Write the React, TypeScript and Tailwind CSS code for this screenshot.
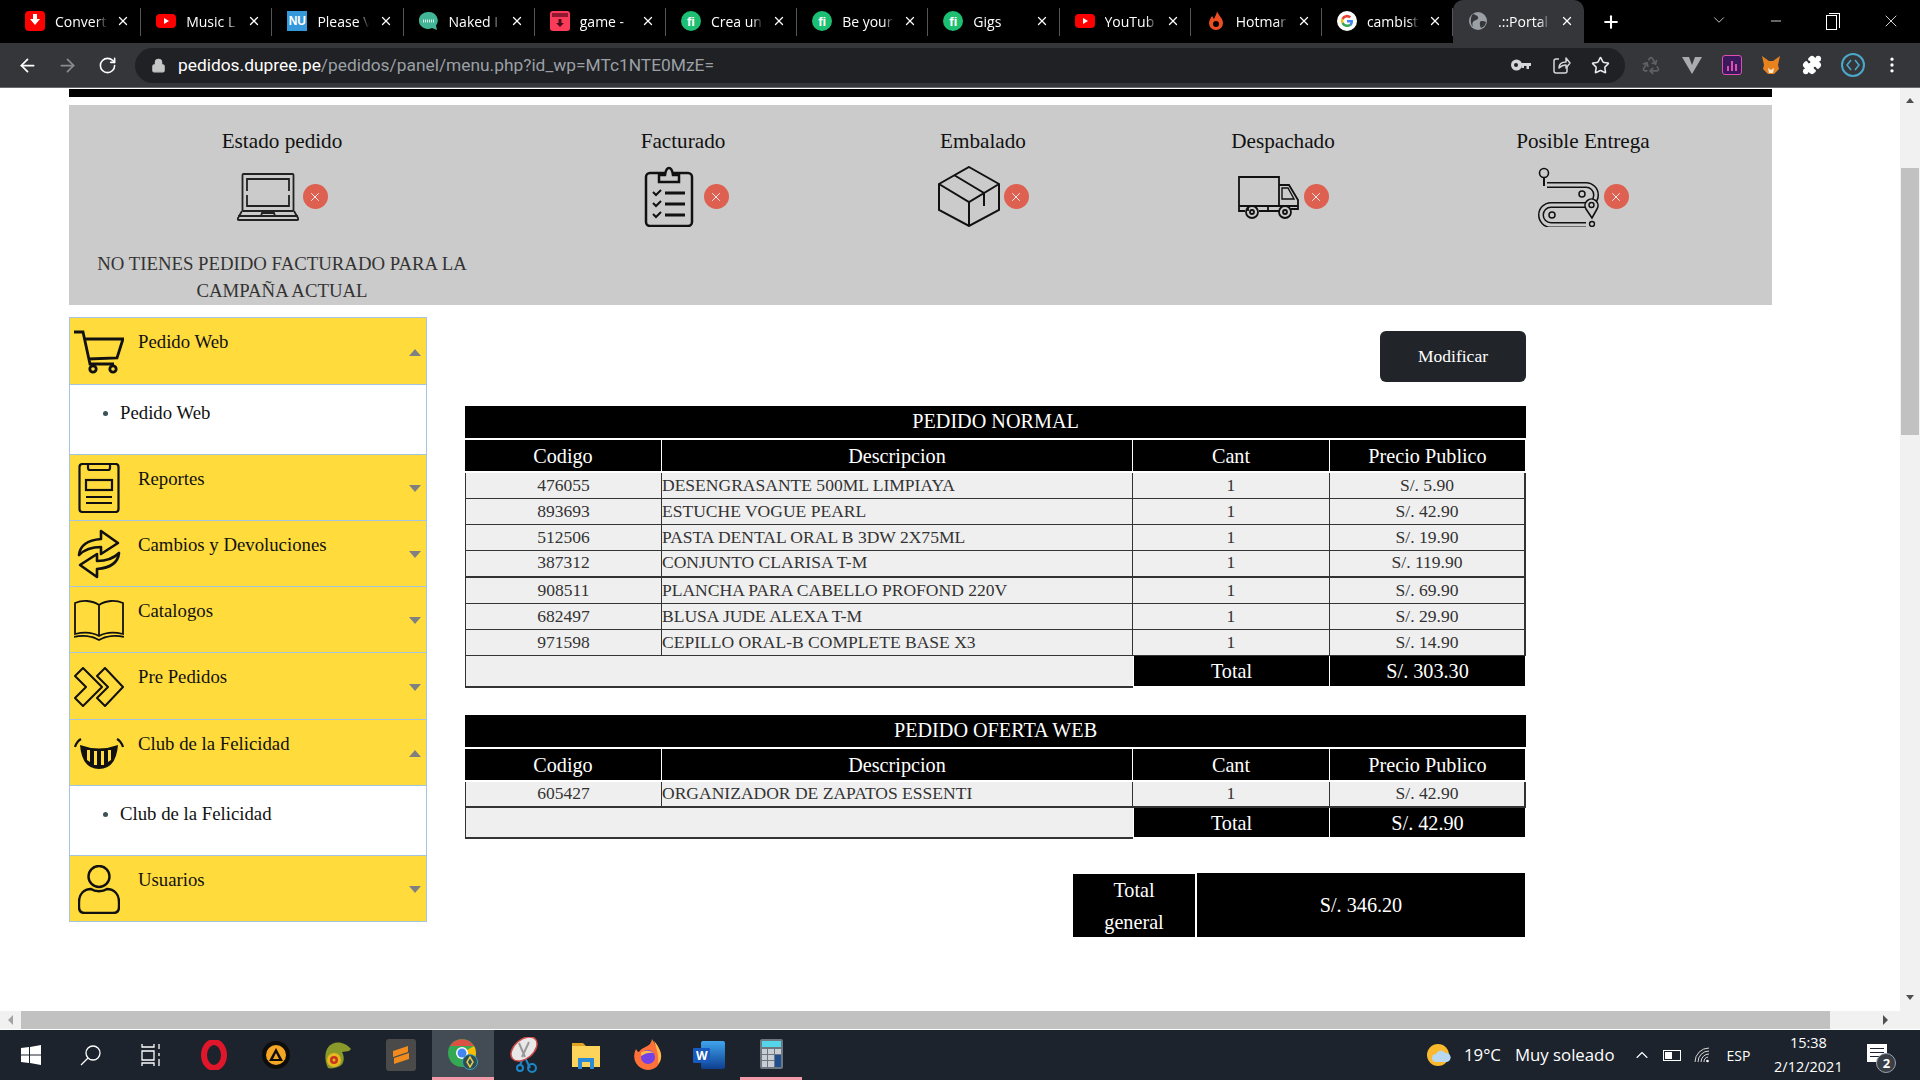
import type { ReactNode } from "react";
import { ArrowLeft, ArrowRight, ChevronDown, ChevronUp, Lock, Minus, MoreVertical, Plus, Puzzle, Recycle, RotateCw, Star, X } from "lucide-react";

// ---- favicons for the tab strip
const Yt = () => (
  <svg viewBox="0 0 20 20" className="w-5 h-5">
    <rect x="0" y="3" width="20" height="14" rx="4" fill="#f00" />
    <path d="M8 7l5 3-5 3z" fill="#fff" />
  </svg>
);
const Fiverr = () => (
  <div className="w-5 h-5 rounded-full bg-[#1dbf73] flex items-center justify-center text-white text-[13px] font-bold font-['Liberation_Sans',sans-serif] leading-none">fi</div>
);
const favicons: Record<string, ReactNode> = {
  convert: (
    <svg viewBox="0 0 20 20" className="w-5 h-5">
      <rect width="20" height="20" rx="4" fill="#f00" />
      <path d="M10 14L5 8h3V3h4v5h3z" fill="#fff" />
    </svg>
  ),
  yt: <Yt />,
  nu: <div className="w-5 h-5 bg-[#3498db] flex items-center justify-center text-white text-[12px] font-bold font-['Liberation_Sans',sans-serif] leading-none">NU</div>,
  naked: (
    <svg viewBox="0 0 20 20" className="w-5 h-5">
      <path d="M10 1a9 8.5 0 0 1 7 13.5L18 19l-5-2A9 8.5 0 1 1 10 1z" fill="#41b596" />
      <path d="M4 10h12" stroke="#d6f0e8" strokeWidth="3" strokeDasharray="1 1" />
    </svg>
  ),
  game: (
    <svg viewBox="0 0 20 20" className="w-5 h-5">
      <rect width="20" height="20" rx="3" fill="#fa3c5a" />
      <rect x="2" y="2" width="16" height="4" fill="#8f1830" />
      <path d="M10 16l-4-4h2.5V8h3v4H14z" fill="#4a0c18" />
    </svg>
  ),
  fi: <Fiverr />,
  hot: (
    <svg viewBox="0 0 20 20" className="w-5 h-5">
      <path d="M11 0c1 4 6 7 6 12a7 7 0 0 1-14 0c0-3 2-5 3-7 1 1 1 2 2 3 1-3 3-5 3-8z" fill="#ef4e23" />
      <circle cx="10" cy="13" r="3" fill="#000" />
    </svg>
  ),
  google: (
    <svg viewBox="0 0 20 20" className="w-5 h-5">
      <circle cx="10" cy="10" r="10" fill="#fff" />
      <path d="M16 10.2c0-.5 0-.9-.1-1.3H10v2.500h3.400a3 3 0 0 1-1.300 1.900l2 1.600c1.200-1.100 1.900-2.700 1.900-4.700z" fill="#4285f4" />
      <path d="M10 16c1.600 0 3-.5 4.100-1.500l-2-1.600c-.6.400-1.300.6-2.100.6-1.600 0-3-1.100-3.500-2.500l-2 1.600C5.500 14.600 7.600 16 10 16z" fill="#34a853" />
      <path d="M6.500 11a3.600 3.600 0 0 1 0-2.200l-2-1.600a6 6 0 0 0 0 5.400z" fill="#fbbc05" />
      <path d="M10 6.400c.9 0 1.700.3 2.300.9l1.800-1.800A6 6 0 0 0 4.500 7.200l2 1.600C7 7.400 8.400 6.400 10 6.400z" fill="#ea4335" />
    </svg>
  ),
  globe: (
    <svg viewBox="0 0 20 20" className="w-5 h-5">
      <circle cx="10" cy="10" r="9" fill="#9aa0a6" />
      <path d="M5 3c2 1 4 1 5 3s-2 3-4 4-2 4-1 6c-3-3-3-10 0-13zM13 10c2 0 4 0 5 1-.5 3-2 5-5 6-1-2-2-6 0-7z" fill="#35363a" />
    </svg>
  ),
};

const tabs = [
  { icon: "convert", label: "Convert" },
  { icon: "yt", label: "Music L" },
  { icon: "nu", label: "Please V" },
  { icon: "naked", label: "Naked I" },
  { icon: "game", label: "game -" },
  { icon: "fi", label: "Crea un" },
  { icon: "fi", label: "Be your" },
  { icon: "fi", label: "Gigs" },
  { icon: "yt", label: "YouTub" },
  { icon: "hot", label: "Hotmar" },
  { icon: "google", label: "cambist" },
  { icon: "globe", label: ".::Portal", active: true },
];

function TabStrip() {
  return (
    <div className="h-[43px] bg-black flex items-end pl-[10px] text-white font-['Open_Sans',sans-serif] text-[14px] relative shrink-0">
      {tabs.map((tab, i) => (
        <div
          key={i}
          className={
            tab.active
              ? "w-[131.2px] h-[43px] bg-[#35363a] rounded-t-[10px] flex items-center pl-[15px] pr-[10px] pb-[1px]"
              : "w-[131.2px] h-[43px] flex items-center pl-[15px] pr-[10px] pb-[1px] border-r border-[#4a4a4a] [border-image:linear-gradient(transparent_20%,#555_20%,#555_82%,transparent_82%)_1]"
          }
        >
          <div className="w-5 h-5 shrink-0">{favicons[tab.icon]}</div>
          <span className="ml-[10px] w-[52px] overflow-hidden whitespace-nowrap [mask-image:linear-gradient(to_right,black_80%,transparent)]">{tab.label}</span>
          <X size={14} strokeWidth={2.2} className="ml-auto shrink-0" />
        </div>
      ))}
      <Plus size={20} strokeWidth={2.5} className="ml-[17px] mb-[11px]" />
      <ChevronDown size={18} strokeWidth={1.2} className="ml-[89px] mb-[14px] text-gray-300" />
      <Minus size={16} strokeWidth={1.2} className="ml-[40px] mb-[14px]" />
      <div className="ml-[42px] mb-[13px] w-[11px] h-[15px] border border-white relative">
        <div className="absolute -top-[3px] left-[2px] w-[11px] h-[15px] border-t border-r border-white" />
      </div>
      <X size={20} strokeWidth={1} className="ml-[44px] mb-[12px]" />
    </div>
  );
}

function Toolbar() {
  return (
    <div className="h-[45px] bg-[#35363a] flex items-center text-white border-b border-[#6b6b6b] shrink-0">
      <ArrowLeft size={21} className="ml-[17px]" />
      <ArrowRight size={21} className="ml-[19px] text-[#8a8b8d]" />
      <RotateCw size={19} className="ml-[20px]" />
      <div className="ml-[18px] w-[1490px] h-[35px] bg-[#202124] rounded-full flex items-center pl-[16px] pr-[15px]">
        <Lock size={15} className="text-[#c4c7c5] fill-[#c4c7c5]" />
        <span className="ml-[12px] text-[17.35px] font-['Roboto',sans-serif] whitespace-nowrap">
          pedidos.dupree.pe<span className="text-[#9aa0a6]">/pedidos/panel/menu.php?id_wp=MTc1NTE0MzE=</span>
        </span>
        <svg viewBox="0 0 20 12" className="ml-auto w-[20px] h-[12px]">
          <circle cx="5.500" cy="6" r="5.500" fill="#d5d6d8" />
          <circle cx="5" cy="6" r="2" fill="#202124" />
          <path d="M9 4h11v3h-2v3h-2.500V7H13v2h-2.500V7H9z" fill="#d5d6d8" />
        </svg>
        <svg viewBox="0 0 20 20" className="ml-[20px] w-[20px] h-[20px]" fill="none" stroke="#d5d6d8" strokeWidth="1.500">
          <path d="M8 4H5a2 2 0 0 0-2 2v10a2 2 0 0 0 2 2h9a2 2 0 0 0 2-2v-4" />
          <path d="M8 13c0-4 3-6 7-6V3l4 5-4 5V10c-3 0-5 1-7 3z" strokeLinejoin="round" />
        </svg>
        <Star size={19} className="ml-[20px] text-[#e8eaed]" />
      </div>
      <Recycle size={20} className="ml-[16px] text-[#5f6164]" />
      <svg viewBox="0 0 20 20" className="w-5 h-5 ml-[21px]">
        <path d="M0 2h7l3 8 3-8h7l-10 17z" fill="#a9acaf" />
      </svg>
      <div className="ml-[20px] w-5 h-5 rounded-[3px] bg-[#3a1a5c] border border-[#e04fb0] flex items-end justify-center gap-[2px] pb-[3px]">
        <div className="w-[2px] h-[5px] bg-[#e04fb0]" />
        <div className="w-[2px] h-[10px] bg-[#e04fb0]" />
        <div className="w-[2px] h-[7px] bg-[#e04fb0]" />
      </div>
      <svg viewBox="0 0 20 20" className="w-5 h-5 ml-[19px]">
        <path d="M1 1l7 5h4l7-5-2 9 1 4-5 5H7l-5-5 1-4z" fill="#e8821e" />
        <path d="M7 13l3 2 3-2-1 5H8z" fill="#f6e9d8" />
      </svg>
      <Puzzle size={20} className="ml-[21px] fill-white" />
      <div className="ml-[19px] w-[24px] h-[24px] rounded-full border-2 border-[#4aa8c8] flex items-center justify-center text-[#4aa8c8]">
        <svg viewBox="0 0 14 14" className="w-[14px] h-[14px]" fill="none" stroke="currentColor" strokeWidth="1.6">
          <path d="M5 2L1 7l4 5M9 2l4 5-4 5" />
        </svg>
      </div>
      <MoreVertical size={20} className="ml-[17px]" />
    </div>
  );
}

// ---- status strip icons
const Laptop = () => (
  <svg viewBox="0 0 62 48" className="w-[62px] h-[48px]" fill="none" stroke="#222" strokeWidth="1.8">
    <rect x="5.500" y="1" width="51" height="37" rx="1" />
    <path d="M10 18V6h42v12M10 22v11h42V22" />
    <path d="M5 38l-4 7q-1 2 1 2h58q2 0 1-2l-4-7M1 43h60M24 43l1-3h12l1 3" />
  </svg>
);
const Clipboard = () => (
  <svg viewBox="0 0 62 61" className="w-[62px] h-[61px]" fill="none" stroke="#111" strokeWidth="2.500">
    <rect x="8" y="7" width="46" height="53" rx="4" />
    <path d="M21 16V9h6q1-7 4-7t4 7h6v7z" fill="#cbcbcb" />
    <path d="M15 26l3 3 5-5M15 37l3 3 5-5M15 48l3 3 5-5" strokeWidth="2" />
    <path d="M27 27h20M27 38h20M27 49h20" strokeWidth="3" />
  </svg>
);
const Box = () => (
  <svg viewBox="0 0 62 61" className="w-[62px] h-[61px]" fill="none" stroke="#111" strokeWidth="2">
    <path d="M31 1l30 17v26L31 60 1 44V18zM1 18l30 18 30-18M31 36v24M16 9l30 18v13" />
  </svg>
);
const Truck = () => (
  <svg viewBox="0 0 62 44" className="w-[62px] h-[44px]" fill="none" stroke="#111" strokeWidth="1.800">
    <path d="M1 31V2h40v29M41 10h10l9 15v9h-7M1 31v5h6M21 36h20M1 31h59M10 31v5M30 31v5" />
    <path d="M44 13h6l6 11H44z" strokeWidth="1.400" />
    <circle cx="14" cy="37" r="6" />
    <circle cx="14" cy="37" r="2" />
    <circle cx="47" cy="37" r="6" />
    <circle cx="47" cy="37" r="2" />
  </svg>
);
const routePath = "M9 19H48A10 10 0 0 1 48 39H13A10 10 0 0 0 13 59H48";
const Route = () => (
  <svg viewBox="0 0 62 61" className="w-[62px] h-[61px]" fill="none">
    <path d={routePath} stroke="#111" strokeWidth="6" />
    <path d={routePath} stroke="#cbcbcb" strokeWidth="3" />
    <circle cx="6" cy="7" r="4.500" fill="#cbcbcb" stroke="#111" strokeWidth="1.600" />
    <path d="M6 12v8" stroke="#111" strokeWidth="2" />
    <circle cx="44" cy="28" r="3" stroke="#111" strokeWidth="1.500" />
    <circle cx="14" cy="49" r="3" stroke="#111" strokeWidth="1.500" />
    <path d="M54 52l-6-9a6.500 6.500 0 1 1 11 0z" fill="#cbcbcb" stroke="#111" strokeWidth="1.600" />
    <circle cx="53.500" cy="39" r="2.500" stroke="#111" strokeWidth="1.400" />
    <circle cx="54" cy="58" r="2.500" fill="#cbcbcb" stroke="#111" strokeWidth="1.400" />
  </svg>
);

function StatusIcon({ children }: { children: ReactNode }) {
  return (
    <div className="flex items-center gap-1 h-[61px]">
      <div className="w-[62px] flex justify-center">{children}</div>
      <div className="w-[25px] h-[25px] rounded-full bg-[#dd6051] flex items-center justify-center">
        <X size={14} strokeWidth={1.5} className="text-white" />
      </div>
    </div>
  );
}

function StatusStep({ title, children }: { title: string; children: ReactNode }) {
  return (
    <div className="w-[300px] flex flex-col items-center pt-[23px]">
      <div className="text-[21.2px] leading-[27px] mb-[11px] text-[#111]">{title}</div>
      <StatusIcon>{children}</StatusIcon>
    </div>
  );
}

function StatusPanel() {
  return (
    <div className="h-[200px] mt-[8px] bg-[#cbcbcb] flex">
      <div className="w-[426px] flex flex-col items-center pt-[23px] px-[20px] text-center">
        <div className="text-[21.2px] leading-[27px] mb-[11px] text-[#111]">Estado pedido</div>
        <StatusIcon>
          <Laptop />
        </StatusIcon>
        <p className="text-[18.8px] leading-[27px] mt-[23px] text-[#333]">NO TIENES PEDIDO FACTURADO PARA LA CAMPAÑA ACTUAL</p>
      </div>
      <div className="flex ml-[38px]">
        <StatusStep title="Facturado"><Clipboard /></StatusStep>
        <StatusStep title="Embalado"><Box /></StatusStep>
        <StatusStep title="Despachado"><Truck /></StatusStep>
        <StatusStep title="Posible Entrega"><Route /></StatusStep>
      </div>
    </div>
  );
}

// ---- side menu icons
const menuIcons: Record<string, ReactNode> = {
  cart: (
    <svg viewBox="0 0 50 44" className="w-[50px] h-[44px]" fill="none" stroke="#111" strokeWidth="2.800">
      <path d="M0 2h9l7 32h24M11 9h38l-6 19-29 1" />
      <circle cx="19" cy="39" r="3.200" />
      <circle cx="39" cy="39" r="3.200" />
    </svg>
  ),
  report: (
    <svg viewBox="0 0 42 50" className="w-[42px] h-[50px]" fill="none" stroke="#111" strokeWidth="2.200">
      <rect x="1.500" y="1" width="39" height="48" rx="3" />
      <path d="M10 1v4q0 2 2 2h18q2 0 2-2V1" />
      <rect x="8" y="17" width="26" height="10" />
      <path d="M8 34h26M8 40h26" />
    </svg>
  ),
  swap: (
    <svg viewBox="0 0 44 50" className="w-[44px] h-[50px]" fill="none" stroke="#111" strokeWidth="2.600" strokeLinejoin="round">
      <path d="M2 26C3 16 12 11 24 10V2l17 12-17 11v-7C14 18 7 21 2 26z" />
      <path d="M42 24C41 34 32 39 20 40v8L3 36l17-11v7c10 0 17-3 22-8z" />
    </svg>
  ),
  book: (
    <svg viewBox="0 0 50 42" className="w-[50px] h-[42px]" fill="none" stroke="#111" strokeWidth="1.800">
      <path d="M25 6C18 1 8 1 1 4v31c8-2 17-2 24 2 7-4 16-4 24-2V4C42 1 32 1 25 6zM25 6v31" />
      <path d="M0 38c8-2 18-1 25 3 7-4 17-5 25-3" />
    </svg>
  ),
  chevrons: (
    <svg viewBox="0 0 50 40" className="w-[50px] h-[40px]" fill="none" stroke="#111" strokeWidth="2" strokeLinejoin="round">
      <path d="M1 9l8-8 19 19L9 39l-8-8 11-11zM23 9l8-8 18 19-18 19-8-8 11-11z" />
    </svg>
  ),
  smile: (
    <svg viewBox="0 0 50 31" className="w-[50px] h-[31px]">
      <path d="M1 9q2-6 6-8M49 9q-2-6-6-8" fill="none" stroke="#111" strokeWidth="2.200" />
      <path d="M6 7q19 7 38 0-2 24-19 24T6 7z" fill="#111" />
      <path d="M13 12h3v12l-3-2zM20 13h3v14h-3zM27 13h3v14h-3zM34 12h3v10l-3 2z" fill="#ffdb3b" />
    </svg>
  ),
  user: (
    <svg viewBox="0 0 42 49" className="w-[42px] h-[49px]" fill="none" stroke="#111" strokeWidth="2.400">
      <circle cx="21" cy="11.500" r="10.500" />
      <path d="M13 24C6 24 1 29 1 37v5q0 6 6 6h28q6 0 6-6v-5c0-8-5-13-12-13-4 3-12 3-16 0z" />
    </svg>
  ),
};

type MenuItem = { label: string; icon: string; height: string; open?: boolean; sub?: string; subHeight?: string };

const menu: MenuItem[] = [
  { label: "Pedido Web", icon: "cart", height: "h-[67px]", open: true, sub: "Pedido Web", subHeight: "h-[70px]" },
  { label: "Reportes", icon: "report", height: "h-[66px]" },
  { label: "Cambios y Devoluciones", icon: "swap", height: "h-[66px]" },
  { label: "Catalogos", icon: "book", height: "h-[66px]" },
  { label: "Pre Pedidos", icon: "chevrons", height: "h-[67px]" },
  { label: "Club de la Felicidad", icon: "smile", height: "h-[66px]", open: true, sub: "Club de la Felicidad", subHeight: "h-[70px]" },
  { label: "Usuarios", icon: "user", height: "h-[66px]" },
];

function SideMenu() {
  return (
    <div className="w-[358px] border border-b-0 border-[#a5c3e3] text-[18.75px] leading-[27px] text-[#111] shrink-0 self-start">
      {menu.map((item) => (
        <div key={item.label}>
          <div className={`${item.height} bg-[#ffdb3b] border-b border-[#a5c3e3] flex`}>
            <div className="w-[58px] mr-[10px] flex items-center justify-center shrink-0 pt-[1px]">{menuIcons[item.icon]}</div>
            <div className="pt-[10px]">{item.label}</div>
            <div className="ml-auto mr-[5px] self-center pt-[2px]">
              {item.open ? (
                <div className="w-0 h-0 border-x-[6px] border-x-transparent border-b-[7px] border-b-[#808080]" />
              ) : (
                <div className="w-0 h-0 border-x-[6px] border-x-transparent border-t-[7px] border-t-[#808080]" />
              )}
            </div>
          </div>
          {item.sub && (
            <div className={`${item.subHeight} bg-white border-b border-[#a5c3e3] pt-[14px] pl-[33px] flex`}>
              <div className="w-[5px] h-[5px] rounded-full bg-[#3c5257] mt-[12px] mr-[12px]" />
              {item.sub}
            </div>
          )}
        </div>
      ))}
    </div>
  );
}

// ---- order tables
type Row = { code: string; desc: string; price: string; line?: string };

const normalRows: Row[] = [
  { code: "476055", desc: "DESENGRASANTE 500ML LIMPIAYA", price: "S/. 5.90" },
  { code: "893693", desc: "ESTUCHE VOGUE PEARL", price: "S/. 42.90" },
  { code: "512506", desc: "PASTA DENTAL ORAL B 3DW 2X75ML", price: "S/. 19.90" },
  { code: "387312", desc: "CONJUNTO CLARISA T-M", price: "S/. 119.90", line: "h-[27px] pb-[3px] border-b-2" },
  { code: "908511", desc: "PLANCHA PARA CABELLO PROFOND 220V", price: "S/. 69.90" },
  { code: "682497", desc: "BLUSA JUDE ALEXA T-M", price: "S/. 29.90" },
  { code: "971598", desc: "CEPILLO ORAL-B COMPLETE BASE X3", price: "S/. 14.90" },
];

const ofertaRows: Row[] = [{ code: "605427", desc: "ORGANIZADOR DE ZAPATOS ESSENTI", price: "S/. 42.90", line: "h-[26px] pb-[2px] border-b-2" }];

function OrderTable({ title, rows, total, footer }: { title: string; rows: Row[]; total: string; footer: string }) {
  const normalLine = "h-[26px] pb-[2px] border-b";
  return (
    <table className="w-[1061px] table-fixed border-separate border-spacing-0">
      <colgroup>
        <col className="w-[197px]" />
        <col className="w-[471px]" />
        <col className="w-[197px]" />
        <col className="w-[196px]" />
      </colgroup>
      <thead className="text-[20.2px] leading-[24px] text-white font-normal">
        <tr>
          <th colSpan={4} className="h-[34px] p-0 pb-[2px] bg-black font-normal border-b-2 border-white">{title}</th>
        </tr>
        <tr>
          <th className="h-[33px] p-0 bg-black font-normal border-b-2 border-r border-white">Codigo</th>
          <th className="h-[33px] p-0 bg-black font-normal border-b-2 border-r border-white">Descripcion</th>
          <th className="h-[33px] p-0 bg-black font-normal border-b-2 border-r border-white">Cant</th>
          <th className="h-[33px] p-0 bg-black font-normal border-b-2 border-r border-white">Precio Publico</th>
        </tr>
      </thead>
      <tbody className="text-[17.55px] leading-[20px] text-[#333]">
        {rows.map((row) => (
          <tr key={row.code}>
            <td className={`${row.line ?? normalLine} px-0 pt-0 bg-[#efefef] border-[#333] border-l border-r text-center`}>{row.code}</td>
            <td className={`${row.line ?? normalLine} px-0 pt-0 bg-[#efefef] border-[#333] border-r whitespace-nowrap`}>{row.desc}</td>
            <td className={`${row.line ?? normalLine} px-0 pt-0 bg-[#efefef] border-[#333] border-r text-center`}>1</td>
            <td className={`${row.line ?? normalLine} px-0 pt-0 bg-[#efefef] border-[#333] border-r-2 text-center`}>{row.price}</td>
          </tr>
        ))}
        <tr>
          <td colSpan={2} className={`${footer} p-0 bg-[#efefef] border-[#333] border-l border-b-2`} />
          <td className={`${footer} p-0 bg-black text-white text-[20.2px] text-center border-x border-white border-b-2`}>Total</td>
          <td className={`${footer} p-0 bg-black text-white text-[20.2px] text-center border-r border-white border-b-2`}>{total}</td>
        </tr>
      </tbody>
    </table>
  );
}

function Orders() {
  return (
    <div className="ml-[38px] w-[1061px] pt-[14px] font-['Liberation_Serif',serif]">
      <div className="flex justify-end">
        <button className="w-[146px] h-[51px] bg-[#212529] text-white text-[17.500px] rounded-[6px]">Modificar</button>
      </div>
      <div className="mt-[24px]">
        <OrderTable title="PEDIDO NORMAL" rows={normalRows} total="S/. 303.30" footer="h-[32px]" />
      </div>
      <div className="mt-[27px]">
        <OrderTable title="PEDIDO OFERTA WEB" rows={ofertaRows} total="S/. 42.90" footer="h-[31px]" />
      </div>
      <div className="mt-[34px] flex justify-end gap-[2px] pr-px text-white text-[20.2px]">
        <div className="w-[122px] h-[63px] mt-px bg-black text-center leading-[32px]">
          Total
          <br />
          general
        </div>
        <div className="w-[328px] h-[64px] bg-black flex items-center justify-center">S/. 346.20</div>
      </div>
    </div>
  );
}

// ---- scrollbars
function VerticalScrollbar() {
  return (
    <div className="w-[20px] bg-[#f1f1f1] flex flex-col items-center shrink-0">
      <div className="h-[24px] flex items-center justify-center shrink-0">
        <div className="w-0 h-0 border-x-[4px] border-x-transparent border-b-[5px] border-b-[#505050]" />
      </div>
      <div className="mt-[56px] w-[18px] h-[267px] bg-[#c1c1c1]" />
      <div className="mt-auto h-[28px] flex items-center justify-center shrink-0">
        <div className="w-0 h-0 border-x-[4px] border-x-transparent border-t-[5px] border-t-[#505050]" />
      </div>
    </div>
  );
}

function HorizontalScrollbar() {
  return (
    <div className="h-[18px] bg-[#f1f1f1] flex items-center border-b border-white box-content shrink-0">
      <div className="w-[21px] flex justify-center">
        <div className="w-0 h-0 border-y-[5px] border-y-transparent border-r-[5px] border-r-[#a3a3a3]" />
      </div>
      <div className="w-[1809px] h-[18px] bg-[#c1c1c1]" />
      <div className="ml-[53px] w-0 h-0 border-y-[5px] border-y-transparent border-l-[5px] border-l-[#505050]" />
    </div>
  );
}

// ---- taskbar
const taskIcons: { key: string; node: ReactNode; active?: boolean; underline?: boolean }[] = [
  {
    key: "win",
    node: (
      <svg viewBox="0 0 20 20" className="w-5 h-5" fill="#fff">
        <path d="M0 3l8-1v7.500H0zM9 1.900L20 0v9.500H9zM0 10.500h8V18l-8-1zM9 10.500h11V20L9 18.100z" />
      </svg>
    ),
  },
  {
    key: "search",
    node: (
      <svg viewBox="0 0 22 22" className="w-[22px] h-[22px] -translate-x-[2px]" fill="none" stroke="#fff" strokeWidth="1.300">
        <circle cx="13" cy="9" r="7" />
        <path d="M8 14l-7 7" />
      </svg>
    ),
  },
  {
    key: "view",
    node: (
      <svg viewBox="0 0 22 22" className="w-[22px] h-[22px] -translate-x-[3px]" fill="none" stroke="#fff" strokeWidth="1.300">
        <path d="M2 0v3h12V0M2 7h12v9H2zM2 22v-3h12v3M19 0v5M19 9v3M19 15v7" />
      </svg>
    ),
  },
  {
    key: "opera",
    node: (
      <svg viewBox="0 0 30 30" className="w-[30px] h-[30px] -translate-x-[2px]" fill="none">
        <ellipse cx="15" cy="15" rx="10" ry="13" stroke="#e0162b" strokeWidth="6" />
      </svg>
    ),
  },
  {
    key: "aimp",
    node: (
      <svg viewBox="0 0 30 30" className="w-[30px] h-[30px] -translate-x-[2px]">
        <circle cx="15" cy="15" r="14" fill="#0d0d0d" />
        <circle cx="15" cy="15" r="10" fill="#f5a623" />
        <path d="M15 8l7 13H8z" fill="#0d0d0d" />
        <path d="M15 13l3 6h-6z" fill="#f5a623" />
      </svg>
    ),
  },
  {
    key: "cham",
    node: (
      <svg viewBox="0 0 30 30" className="w-[30px] h-[30px] -translate-x-[2px]">
        <path d="M6 28C2 20 2 8 10 4c6-3 14-1 19 5l-2 2-7 1c3 5 2 12-2 14-4 2-9 3-12 2z" fill="#8a9a2a" />
        <circle cx="12" cy="20" r="7" fill="#e8b820" />
        <circle cx="12" cy="20" r="4" fill="#c8351e" />
        <circle cx="12" cy="20" r="1.500" fill="#e8b820" />
      </svg>
    ),
  },
  {
    key: "sublime",
    node: (
      <div className="w-[30px] h-[32px] rounded-[3px] bg-[#4a4a4a] flex items-center justify-center">
        <svg viewBox="0 0 20 22" className="w-[20px] h-[22px]">
          <path d="M2 7l15-5v6L2 13zM18 9v6L3 20v-6z" fill="#f28b1e" />
        </svg>
      </div>
    ),
  },
  {
    key: "chrome",
    active: true,
    node: (
      <svg viewBox="0 0 32 32" className="w-[32px] h-[32px]">
        <circle cx="15" cy="15" r="14" fill="#34a853" />
        <path d="M3 8a14 14 0 0 1 24 0H15z" fill="#dd5044" />
        <path d="M27 8a14 14 0 0 1-10 21l-2-14z" fill="#fbbc05" />
        <circle cx="15" cy="15" r="6" fill="#fff" />
        <circle cx="15" cy="15" r="4.500" fill="#4285f4" />
        <circle cx="23" cy="24" r="7.500" fill="#2a4d56" stroke="#3aa0b8" />
        <path d="M23 19l3 5-3 5-3-5z" fill="none" stroke="#e8c84a" strokeWidth="1.500" />
      </svg>
    ),
  },
  {
    key: "snip",
    node: (
      <svg viewBox="0 0 32 36" className="w-[32px] h-[36px]">
        <path d="M14 14l8 17M21 8L12 28" stroke="#1c87c9" strokeWidth="2" />
        <ellipse cx="16" cy="12" rx="15" ry="9.500" fill="#e8e8e8" stroke="#d04a4a" strokeWidth="1.500" transform="rotate(-40 16 12)" />
        <path d="M11 6l6 14M21 5L14 20" stroke="#999" strokeWidth="2" />
        <circle cx="24" cy="31" r="4" fill="none" stroke="#1c87c9" strokeWidth="2" />
        <circle cx="12" cy="31" r="3" fill="none" stroke="#1c87c9" strokeWidth="2" />
      </svg>
    ),
  },
  {
    key: "folder",
    node: (
      <svg viewBox="0 0 28 28" className="w-[28px] h-[28px]">
        <path d="M0 2h11l3 3H0z" fill="#e0a422" />
        <rect y="5" width="28" height="21" fill="#fcd45c" />
        <path d="M6 28V17h16v11h-4v-7h-8v7z" fill="#2a8bd8" />
      </svg>
    ),
  },
  {
    key: "firefox",
    node: (
      <svg viewBox="0 0 30 32" className="w-[30px] h-[32px]">
        <path d="M15 31A14 14 0 0 1 3 10c1 2 2 3 3 3 2-4 8-5 11-8 1-2 2-4 2-5 2 3 3 5 4 7 4 3 6 8 5 12-1 7-6 12-13 12z" fill="#ff7139" />
        <path d="M21 2c3 3 7 9 7 15 0 3-1 6-3 8 1-8-1-15-4-23z" fill="#ffbd4f" />
        <circle cx="15" cy="18" r="7" fill="#7542e5" />
        <path d="M8 14c3-3 9-3 13 0-4-1-9 0-13 3z" fill="#ffbd4f" />
      </svg>
    ),
  },
  {
    key: "word",
    node: (
      <div className="relative w-[32px] h-[28px]">
        <div className="absolute right-0 top-0 w-[24px] h-[28px] rounded-[2px] bg-gradient-to-b from-[#41a5ee] to-[#103f91]" />
        <div className="absolute left-0 top-[7px] w-[17px] h-[15px] bg-[#185abd] rounded-[1px] flex items-center justify-center text-white text-[12px] font-bold font-['Open_Sans',sans-serif] leading-none">W</div>
      </div>
    ),
  },
  {
    key: "calc",
    underline: true,
    node: (
      <div className="w-[23px] h-[30px] bg-[#6d7780] rounded-[2px] p-[2px] flex flex-col gap-[2px]">
        <div className="h-[6px] bg-[#55d5ea]" />
        <div className="grid grid-cols-3 gap-[1px] flex-1">
          <div className="bg-[#c8ced3]" />
          <div className="bg-[#c8ced3]" />
          <div className="bg-[#c8ced3]" />
          <div className="bg-[#c8ced3]" />
          <div className="bg-[#c8ced3]" />
          <div className="bg-[#1f4f8f] row-span-2" />
          <div className="bg-[#c8ced3]" />
          <div className="bg-[#c8ced3]" />
        </div>
      </div>
    ),
  },
];

function Taskbar() {
  return (
    <div className="h-[50px] bg-[#1c232c] flex items-center text-white font-['Open_Sans',sans-serif] shrink-0">
      {taskIcons.map((t) => (
        <div
          key={t.key}
          className={
            t.active
              ? "w-[61.7px] h-full bg-[#434b54] border-b-[3px] border-[#f29ba6] flex items-center justify-center shrink-0"
              : t.underline
                ? "w-[61.7px] h-full border-b-[3px] border-[#f29ba6] flex items-center justify-center shrink-0"
                : "w-[61.7px] h-full flex items-center justify-center shrink-0"
          }
        >
          {t.node}
        </div>
      ))}
      <svg viewBox="0 0 24 24" className="ml-[625px] w-[24px] h-[24px]">
        <circle cx="11" cy="12" r="11" fill="#fbb92d" />
        <path d="M9 19a4 4 0 0 1 0-8 5 5 0 0 1 9-1 4.500 4.500 0 0 1 2 9z" fill="#b7d8f0" />
      </svg>
      <span className="ml-[13px] text-[16.8px] whitespace-nowrap">19°C</span>
      <span className="ml-[14px] text-[16.8px] whitespace-nowrap">Muy soleado</span>
      <ChevronUp size={20} strokeWidth={1.3} className="ml-[18px]" />
      <div className="ml-[11px] w-[18px] h-[11px] border border-white flex p-[1px]">
        <div className="w-[7px] bg-white" />
      </div>
      <svg viewBox="0 0 16 16" className="ml-[13px] w-[16px] h-[16px]" fill="none" stroke="#d8d8d8" strokeWidth="1">
        <path d="M1 15A14 14 0 0 1 15 1M4 15A11 11 0 0 1 15 4M7 15a8 8 0 0 1 8-8M10 15a5 5 0 0 1 4-5" />
        <circle cx="13.500" cy="14" r="1.300" fill="#fff" stroke="none" />
      </svg>
      <span className="ml-[16px] text-[14px]">ESP</span>
      <div className="ml-[18px] w-[80px] text-center text-[14.5px] leading-[24px] shrink-0">
        15:38
        <br />
        2/12/2021
      </div>
      <div className="ml-[19px] relative w-[20px] h-[18px] bg-white mb-[4px] shrink-0">
        <div className="absolute left-[3px] top-[4px] w-[14px] h-[1px] bg-[#1c232c]" />
        <div className="absolute left-[3px] top-[8px] w-[14px] h-[1px] bg-[#1c232c]" />
        <div className="absolute left-[3px] top-[12px] w-[14px] h-[1px] bg-[#1c232c]" />
        <div className="absolute left-[9px] top-[9px] w-[20px] h-[20px] rounded-full bg-[#3a3f46] border border-gray-400 flex items-center justify-center text-[13px] font-bold text-white leading-none">2</div>
      </div>
    </div>
  );
}

export default function App() {
  return (
    <div className="w-[1920px] h-[1080px] overflow-hidden flex flex-col bg-white">
      <TabStrip />
      <Toolbar />
      <div className="flex-1 flex min-h-0">
        <div className="flex-1 pl-[69px] pt-[1px] font-['Liberation_Serif',serif] overflow-hidden">
          <div className="w-[1703px]">
            <div className="h-[8px] bg-black" />
            <StatusPanel />
            <div className="flex mt-[12px]">
              <SideMenu />
              <Orders />
            </div>
          </div>
        </div>
        <VerticalScrollbar />
      </div>
      <HorizontalScrollbar />
      <Taskbar />
    </div>
  );
}
